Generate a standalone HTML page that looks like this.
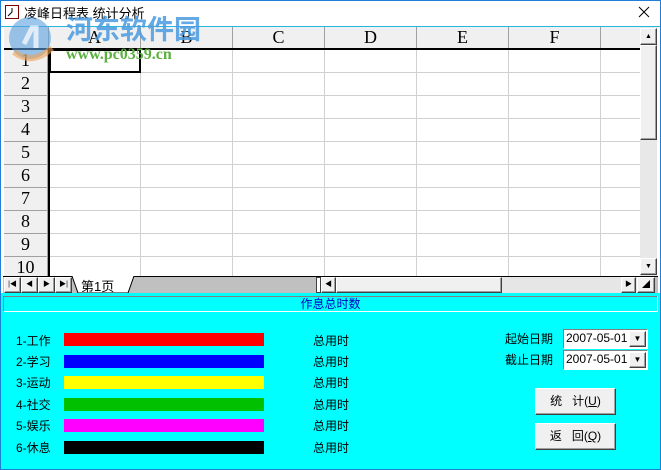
<!DOCTYPE html>
<html><head><meta charset="utf-8"><style>
*{margin:0;padding:0;box-sizing:border-box}
body{width:661px;height:470px;position:relative;overflow:hidden;background:#fff;font-family:"Liberation Sans","Noto Sans CJK SC",sans-serif;font-size:12px}
.a{position:absolute}
.hdr{background:#f0f0f0;border-right:1px solid #a0a0a0;border-bottom:1px solid #a0a0a0;font-family:"Liberation Serif",serif;font-size:18px;text-align:center;color:#000}
.vl{position:absolute;width:1px;background:#d0d0d0}
.hl{position:absolute;height:1px;background:#d0d0d0}
.btn{background:#f0f0f0;border:1px solid;border-color:#fff #404040 #404040 #fff;box-shadow:inset -1px -1px #a0a0a0}
.cy{background:#00ffff}
.lbl{position:absolute;font-size:12px;color:#000}
.bar{position:absolute;left:64px;width:200px;height:13px}
</style></head><body>
<div class="a" style="left:0;top:0;width:661px;height:470px;border:1px solid #1e7fd8"></div>
<!-- title -->
<div class="a" style="left:5px;top:5px;width:14px;height:14px;border:1px solid #800000;background:#fff"></div>
<svg class="a" style="left:5px;top:5px" width="14" height="14"><path d="M3 11 L7 7 L7 3" stroke="#000" fill="none"/></svg>
<div class="a" style="left:24px;top:3px;font-size:13px">凌峰日程表 统计分析</div>
<svg class="a" style="left:638px;top:6px" width="12" height="12"><path d="M1 1 L11 11 M11 1 L1 11" stroke="#000" stroke-width="1"/></svg>
<div class="a" style="left:1px;top:26px;width:659px;height:1px;background:#26b6e0"></div>
<!-- grid -->
<div class="a" style="left:4px;top:27px;width:636px;height:249px;background:#fff;overflow:hidden">
<div class="a hdr" style="left:0;top:0;width:45px;height:22px"></div>
<div class="a hdr" style="left:45px;top:0;width:92px;height:22px">A</div>
<div class="a hdr" style="left:137px;top:0;width:92px;height:22px">B</div>
<div class="a hdr" style="left:229px;top:0;width:92px;height:22px">C</div>
<div class="a hdr" style="left:321px;top:0;width:92px;height:22px">D</div>
<div class="a hdr" style="left:413px;top:0;width:92px;height:22px">E</div>
<div class="a hdr" style="left:505px;top:0;width:92px;height:22px">F</div>
<div class="a hdr" style="left:597px;top:0;width:92px;height:22px"></div>
<div class="a" style="left:0;top:21px;width:640px;height:2px;background:#000"></div>
<div class="a" style="left:44px;top:22px;width:2px;height:230px;background:#000"></div>
<div class="a hdr" style="left:0;top:23px;width:44px;height:23px">1</div>
<div class="a hdr" style="left:0;top:46px;width:44px;height:23px">2</div>
<div class="a hdr" style="left:0;top:69px;width:44px;height:23px">3</div>
<div class="a hdr" style="left:0;top:92px;width:44px;height:23px">4</div>
<div class="a hdr" style="left:0;top:115px;width:44px;height:23px">5</div>
<div class="a hdr" style="left:0;top:138px;width:44px;height:23px">6</div>
<div class="a hdr" style="left:0;top:161px;width:44px;height:23px">7</div>
<div class="a hdr" style="left:0;top:184px;width:44px;height:23px">8</div>
<div class="a hdr" style="left:0;top:207px;width:44px;height:23px">9</div>
<div class="a hdr" style="left:0;top:230px;width:44px;height:23px">10</div>
<div class="vl" style="left:136px;top:23px;height:230px"></div>
<div class="vl" style="left:228px;top:23px;height:230px"></div>
<div class="vl" style="left:320px;top:23px;height:230px"></div>
<div class="vl" style="left:412px;top:23px;height:230px"></div>
<div class="vl" style="left:504px;top:23px;height:230px"></div>
<div class="vl" style="left:596px;top:23px;height:230px"></div>
<div class="hl" style="left:46px;top:45px;width:600px"></div>
<div class="hl" style="left:46px;top:68px;width:600px"></div>
<div class="hl" style="left:46px;top:91px;width:600px"></div>
<div class="hl" style="left:46px;top:114px;width:600px"></div>
<div class="hl" style="left:46px;top:137px;width:600px"></div>
<div class="hl" style="left:46px;top:160px;width:600px"></div>
<div class="hl" style="left:46px;top:183px;width:600px"></div>
<div class="hl" style="left:46px;top:206px;width:600px"></div>
<div class="hl" style="left:46px;top:229px;width:600px"></div>
<div class="a" style="left:45px;top:22px;width:92px;height:24px;border:2px solid #000"></div>
</div>
<!-- watermark -->
<svg class="a" style="left:2px;top:14px" width="60" height="50"><circle cx="28" cy="24" r="21" fill="#5aa0e0" opacity=".6"/><path d="M12 38 Q30 52 50 34" stroke="#f0a050" stroke-width="6" fill="none" opacity=".6"/><path d="M22 30 L30 14 L34 14 L34 34" stroke="#fff" stroke-width="5" fill="none" opacity=".7"/></svg>
<div class="a" style="left:66px;top:13px;font-size:27px;font-weight:bold;color:#4a9ae0;opacity:.85;font-family:'Noto Sans CJK SC',sans-serif;line-height:30px">河东软件园</div>
<div class="a" style="left:66px;top:46px;font-size:16px;font-weight:bold;color:#5cb040;font-family:'Liberation Serif',serif">www.pc0359.cn</div>
<!-- vscroll -->
<div class="a" style="left:640px;top:27px;width:17px;height:249px;background:#e8e8e8"></div>
<div class="a btn" style="left:640px;top:28px;width:17px;height:17px;font-size:7px;text-align:center;line-height:15px">▲</div>
<div class="a btn" style="left:640px;top:45px;width:17px;height:95px"></div>
<div class="a btn" style="left:640px;top:258px;width:17px;height:17px;font-size:7px;text-align:center;line-height:15px">▼</div>
<!-- tab bar -->
<div class="a" style="left:3px;top:276px;width:655px;height:17px;background:#c0c0c0;border-top:1px solid #000"></div>
<div class="a btn" style="left:4px;top:277px;width:17px;height:16px;font-size:7px;text-align:center;line-height:14px">|◀</div>
<div class="a btn" style="left:21px;top:277px;width:17px;height:16px;font-size:7px;text-align:center;line-height:14px">◀</div>
<div class="a btn" style="left:38px;top:277px;width:17px;height:16px;font-size:7px;text-align:center;line-height:14px">▶</div>
<div class="a btn" style="left:55px;top:277px;width:17px;height:16px;font-size:7px;text-align:center;line-height:14px">▶|</div>
<svg class="a" style="left:72px;top:276px" width="62" height="18"><path d="M0 0 L6 17 L56 17 L62 0" fill="#fff" stroke="#000"/></svg>
<div class="a" style="left:81px;top:276px;font-size:13px">第1页</div>
<div class="a" style="left:316px;top:277px;width:5px;height:16px;background:#fff;border:1px solid #404040"></div>
<div class="a" style="left:321px;top:277px;width:316px;height:16px;background:#e6e6e6"></div>
<div class="a btn" style="left:321px;top:277px;width:15px;height:16px;font-size:7px;text-align:center;line-height:14px">◀</div>
<div class="a btn" style="left:336px;top:277px;width:166px;height:16px"></div>
<div class="a btn" style="left:621px;top:277px;width:15px;height:16px;font-size:7px;text-align:center;line-height:14px">▶</div>
<div class="a btn" style="left:637px;top:277px;width:18px;height:16px;font-size:8px;text-align:center;line-height:14px">◢</div>
<!-- cyan panel -->
<div class="a cy" style="left:1px;top:293px;width:659px;height:176px"></div>
<div class="a" style="left:3px;top:296px;width:655px;height:16px;border:1px solid;border-color:#808080 #fff #fff #808080;text-align:center;color:#0000c0;font-size:12px;line-height:14px">作息总时数</div>
<div class="lbl" style="left:16px;top:332px">1-工作</div>
<div class="lbl" style="left:16px;top:353px">2-学习</div>
<div class="lbl" style="left:16px;top:374px">3-运动</div>
<div class="lbl" style="left:16px;top:396px">4-社交</div>
<div class="lbl" style="left:16px;top:417px">5-娱乐</div>
<div class="lbl" style="left:16px;top:439px">6-休息</div>
<div class="bar" style="top:333px;background:#f00"></div>
<div class="bar" style="top:355px;background:#00f"></div>
<div class="bar" style="top:376px;background:#ff0"></div>
<div class="bar" style="top:398px;background:#00c000"></div>
<div class="bar" style="top:419px;background:#f0f"></div>
<div class="bar" style="top:441px;background:#000"></div>
<div class="lbl" style="left:313px;top:332px">总用时</div>
<div class="lbl" style="left:313px;top:353px">总用时</div>
<div class="lbl" style="left:313px;top:374px">总用时</div>
<div class="lbl" style="left:313px;top:396px">总用时</div>
<div class="lbl" style="left:313px;top:417px">总用时</div>
<div class="lbl" style="left:313px;top:439px">总用时</div>
<div class="lbl" style="left:505px;top:330px">起始日期</div>
<div class="lbl" style="left:505px;top:351px">截止日期</div>
<div class="a" style="left:563px;top:329px;width:85px;height:20px;background:#fff;border:1px solid;border-color:#808080 #fff #fff #808080"></div>
<div class="a" style="left:566px;top:331px;font-size:12px">2007-05-01</div>
<div class="a btn" style="left:629px;top:331px;width:17px;height:16px;font-size:8px;text-align:center;line-height:14px">▼</div>
<div class="a" style="left:563px;top:350px;width:85px;height:20px;background:#fff;border:1px solid;border-color:#808080 #fff #fff #808080"></div>
<div class="a" style="left:566px;top:352px;font-size:12px">2007-05-01</div>
<div class="a btn" style="left:629px;top:352px;width:17px;height:16px;font-size:8px;text-align:center;line-height:14px">▼</div>
<div class="a btn" style="left:535px;top:388px;width:81px;height:27px;text-align:center;line-height:24px;font-size:12px">统&nbsp;&nbsp;&nbsp;计(<u>U</u>)</div>
<div class="a btn" style="left:535px;top:423px;width:81px;height:27px;text-align:center;line-height:24px;font-size:12px">返&nbsp;&nbsp;&nbsp;回(<u>Q</u>)</div>
</body></html>
